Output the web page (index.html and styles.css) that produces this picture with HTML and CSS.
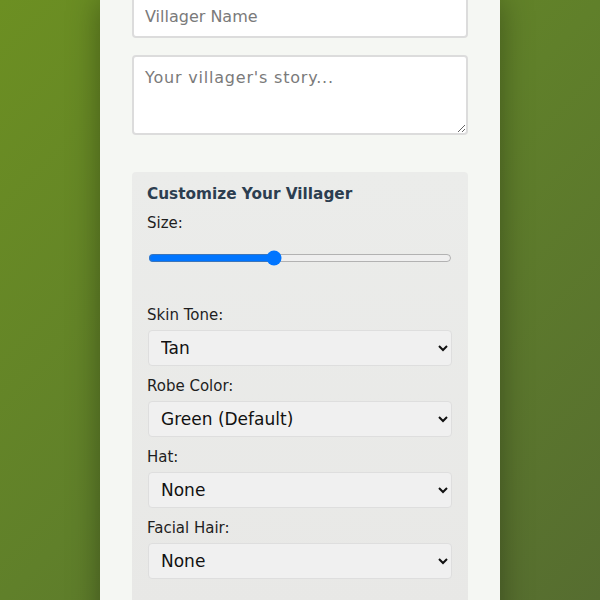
FILE: index.html
```html
<!DOCTYPE html>
<html lang="en">
<head>
<meta charset="utf-8">
<title>Villager Creator</title>
<link rel="stylesheet" href="styles.css">
</head>
<body>
<main class="sheet">
  <form class="villager-form">
    <input class="field name-field" type="text" placeholder="Villager Name">
    <textarea class="field story-field" placeholder="Your villager's story..."></textarea>

    <section class="custom-panel">
      <h2 class="panel-title">Customize Your Villager</h2>

      <label class="opt-label" for="size">Size:</label>
      <input class="size-range" id="size" type="range" min="0" max="100" value="41">

      <div class="opt">
        <label class="opt-label" for="skin">Skin Tone:</label>
        <select class="opt-select" id="skin">
          <option>Tan</option>
        </select>
      </div>

      <div class="opt">
        <label class="opt-label" for="robe">Robe Color:</label>
        <select class="opt-select" id="robe">
          <option>Green (Default)</option>
        </select>
      </div>

      <div class="opt">
        <label class="opt-label" for="hat">Hat:</label>
        <select class="opt-select" id="hat">
          <option>None</option>
        </select>
      </div>

      <div class="opt">
        <label class="opt-label" for="beard">Facial Hair:</label>
        <select class="opt-select" id="beard">
          <option>None</option>
        </select>
      </div>
    </section>
  </form>
</main>
</body>
</html>
```
FILE: styles.css
```css
* {
  box-sizing: border-box;
}

html, body {
  margin: 0;
  height: 100%;
}

body {
  background: linear-gradient(135deg, #6c8f22 0%, #60802a 50%, #566d30 100%);
  font-family: "DejaVu Sans", "Liberation Sans", sans-serif;
  color: #222;
  display: flex;
  justify-content: center;
  overflow: hidden;
}

.sheet {
  width: 400px;
  min-height: 900px;
  background: #f5f7f3;
  padding: 0 32px;
  box-shadow: 0 0 30px rgba(0, 0, 0, 0.35);
}

.villager-form {
  display: flex;
  flex-direction: column;
  margin-top: -6px;
}

.field {
  display: block;
  width: 100%;
  border: 2px solid #dcdcdc;
  border-radius: 4px;
  background: #fff;
  font-family: inherit;
  font-size: 16px;
  color: #333;
  padding: 11px 11px;
}

.field::placeholder {
  color: #7a7a7a;
}

.name-field {
  height: 44px;
  margin-bottom: 17px;
}

.story-field {
  height: 80px;
  resize: vertical;
  margin-bottom: 37px;
  letter-spacing: 0.8px;
}

.custom-panel {
  background: linear-gradient(180deg, #ebecea 0%, #e8e8e6 100%);
  border-radius: 4px;
  padding: 12px 17px 20px 15px;
}

.panel-title {
  margin: 0 0 10px;
  font-size: 15.3px;
  font-weight: bold;
  color: #2c3e50;
  line-height: 20px;
}

.opt-label {
  display: block;
  font-size: 15px;
  line-height: 18px;
  color: #1e1e1e;
}

.size-range {
  display: block;
  width: 100%;
  margin: 18px 0 40px 1px;
}

.opt {
  display: flex;
  flex-direction: column;
  margin-bottom: 11px;
}

.opt-label + .opt-select {
  margin-top: 6px;
}

.opt-select {
  margin-left: 1px;
  height: 36px;
  width: 100%;
  border: 1px solid #dedede;
  border-radius: 4px;
  background-color: #f0f0f0;
  font-family: inherit;
  font-size: 17px;
  color: #111;
  padding: 0 8px;
}
```
